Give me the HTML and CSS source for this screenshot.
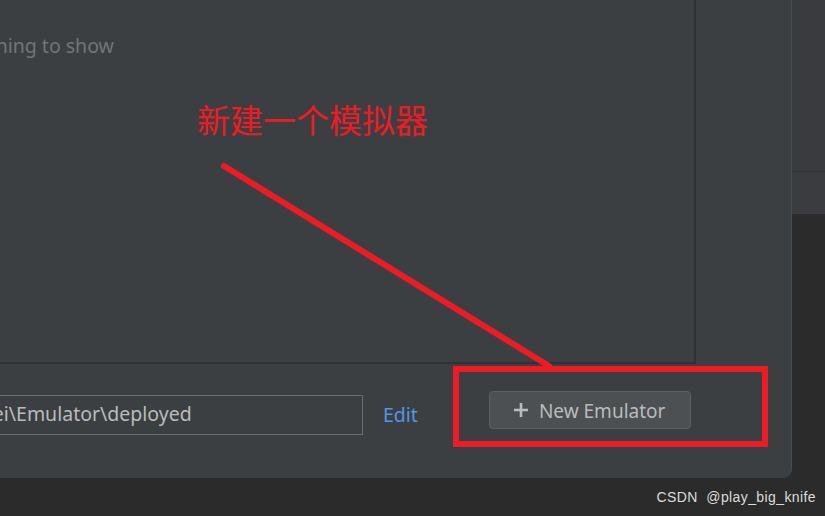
FILE: index.html
```html
<!DOCTYPE html>
<html lang="zh-CN">

<head>
  <meta charset="UTF-8">
  <title>Device Manager</title>
  <link rel="stylesheet" href="styles.css">
</head>

<body>
  <div class="screen">
    <div class="workspace">
      <section class="dialog">
        <div class="device-list">
          <p class="empty-text">Nothing to show</p>
        </div>
        <div class="dialog-footer">
          <div class="path-field"><span class="path-text">Huawei\Emulator\deployed</span></div>
          <a class="edit-link" href="#">Edit</a>
          <button class="new-button">
            <svg class="plus-icon" width="16" height="16" viewBox="0 0 16 16">
              <path d="M8 1v14M1 8h14" stroke="#bbbbbb" stroke-width="2.6" fill="none" />
            </svg>
            <span>New Emulator</span>
          </button>
        </div>
      </section>
      <div class="ide-edge">
        <div class="edge-top"></div>
        <div class="edge-mid"></div>
      </div>
    </div>
    <div class="credit">CSDN&nbsp; @play_big_knife</div>

    <!-- red markup drawn over the screenshot -->
    <p class="note">新建一个模拟器</p>
    <svg class="markup" width="825" height="516" viewBox="0 0 825 516">
      <line x1="224" y1="166" x2="549" y2="366" stroke="#ed1c24" stroke-width="6" stroke-linecap="round" />
      <rect x="456" y="369" width="309" height="75" stroke="#ed1c24" stroke-width="6" fill="none" />
    </svg>
  </div>
</body>

</html>
```

FILE: styles.css
```css
:root {
    --panel: #3c3f41;
    --panel-edge: #2f3133;
    --backdrop: #2b2b2b;
    --text: #bbbbbb;
    --muted: #727476;
    --link: #5394ec;
    --marker: #ed1c24;
}

html,
body {
    margin: 0;
    padding: 0;
}

body {
    background-color: var(--backdrop);
    font-family: "Noto Sans", "Open Sans", sans-serif;
    overflow: hidden;
}

.screen {
    position: relative;
    display: flex;
    flex-direction: column;
    width: 825px;
    height: 516px;
}

.workspace {
    display: flex;
    height: 478px;
}

.dialog {
    display: flex;
    flex-direction: column;
    width: 792px;
    background-color: var(--panel);
    border-right: 1px solid #494c4e;
    border-bottom-right-radius: 9px;
    box-sizing: border-box;
}

.device-list {
    width: 696px;
    height: 364px;
    box-sizing: border-box;
    border-right: 2px solid var(--panel-edge);
    border-bottom: 2px solid var(--panel-edge);
    overflow: hidden;
}

.empty-text {
    margin: 32px 0 0 -38px;
    font-size: 19.5px;
    color: var(--muted);
    white-space: nowrap;
}

.dialog-footer {
    display: flex;
    align-items: flex-start;
    padding-top: 27px;
}

.path-field {
    width: 363px;
    height: 40px;
    margin-top: 4px;
    box-sizing: border-box;
    border: 1px solid #6a6c6e;
    border-left: none;
    overflow: hidden;
    white-space: nowrap;
    font-size: 19.5px;
    line-height: 36px;
    color: var(--text);
}

.path-text {
    display: inline-block;
    margin-left: -60px;
}

.edit-link {
    margin: 9px 0 0 20px;
    font-size: 19.5px;
    line-height: 30px;
    color: var(--link);
    text-decoration: none;
}

.new-button {
    display: flex;
    align-items: center;
    gap: 10px;
    width: 202px;
    height: 38px;
    margin-left: 71px;
    padding: 2px 0 0 23px;
    box-sizing: border-box;
    background-color: #4c5052;
    border: 1px solid #5e6163;
    border-radius: 4px;
    font-family: inherit;
    font-size: 19px;
    color: var(--text);
}

.plus-icon {
    flex: none;
    margin-top: -2px;
}

.ide-edge {
    flex: 1;
    display: flex;
    flex-direction: column;
}

.edge-top {
    height: 171px;
    background-color: #393b3e;
    border-bottom: 1px solid var(--panel-edge);
}

.edge-mid {
    height: 42px;
    background-color: #3a3c3f;
}

.credit {
    flex: 1;
    display: flex;
    align-items: center;
    justify-content: flex-end;
    padding-right: 9px;
    font-family: "Liberation Sans", sans-serif;
    font-size: 14px;
    letter-spacing: 0.4px;
    color: #dcdcdc;
}

.note {
    position: absolute;
    left: 197px;
    top: 103px;
    margin: 0;
    font-family: "Noto Sans CJK SC", sans-serif;
    font-size: 33px;
    line-height: 1;
    color: var(--marker);
}

.markup {
    position: absolute;
    left: 0;
    top: 0;
    pointer-events: none;
}
```
